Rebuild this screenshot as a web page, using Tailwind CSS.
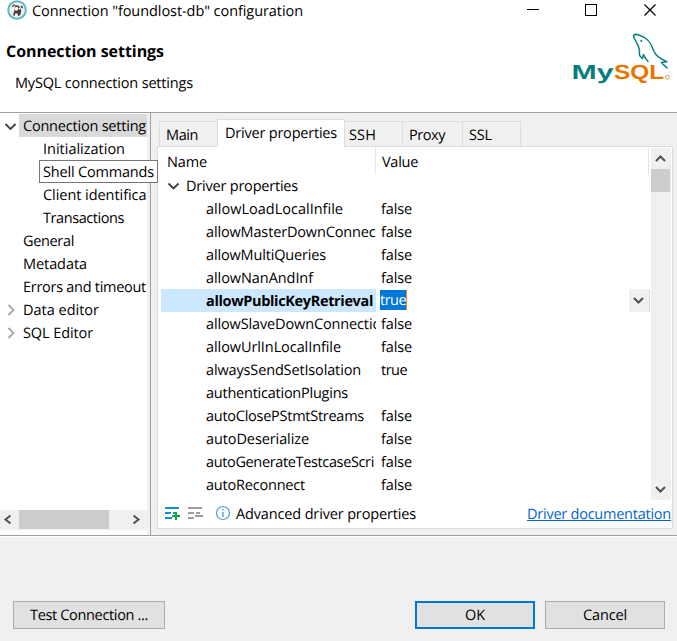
<!DOCTYPE html>
<html lang="en">
<head>
<meta charset="utf-8">
<title>Connection "foundlost-db" configuration</title>
<script src="https://cdn.jsdelivr.net/npm/@tailwindcss/browser@4"></script>
</head>
<body class="w-[677px] h-[641px] overflow-hidden flex flex-col bg-[#f0f0f0] text-black font-['Open_Sans','Noto_Sans',sans-serif] text-[14.5px] leading-[23px] whitespace-nowrap [text-rendering:geometricPrecision] [&_span]:relative [&_span]:top-px">

<!-- Title bar and header -->
<header class="h-[113px] shrink-0 bg-white border-b border-[#a0a0a0]">
  <div class="h-[22px] flex items-start pl-[7px]">
    <svg class="w-[20px] h-[20px] shrink-0" viewBox="0 0 20 20">
      <circle cx="10" cy="10" r="8.8" fill="#f4f1ee" stroke="#5bb9c4" stroke-width="2"/>
      <path d="M4.5 7.5 6 4.8l2-.6-.5 1.6zM13.4 5.2l2.2 1.2.5 2-1.8-.7z" fill="#3b302c"/>
      <path d="M8 5.500c2-.8 4 0 5 1.500l1.300 4-1 4-2 1.200-1-3-2 .2-.8 2.600-1.500-.9 1-3.300z" fill="#4b403c"/>
      <path d="M7.500 7.500l3-.7 1 2.500-2 1.500-2-.7z" fill="#fff"/>
      <circle cx="12.500" cy="8.500" r=".9" fill="#fff"/>
    </svg>
    <div class="ml-[5px] -mt-px"><span data-w="271">Connection "foundlost-db" configuration</span></div>
    <svg class="w-[134px] h-[22px] ml-auto mr-[16px]" viewBox="0 0 134 22" fill="none" stroke="#000" shape-rendering="crispEdges">
      <path d="M0 9.500h12M58.500 4.500h11v11h-11z"/>
      <path d="M117.500 4.500l11 11M128.500 4.500l-11 11" shape-rendering="auto" stroke-width="1.200"/>
    </svg>
  </div>
  <div class="flex justify-between">
    <div class="pl-[6px] pt-[17px]">
      <div class="font-bold text-[16px]"><span data-w="158">Connection settings</span></div>
      <div class="pl-[9px] pt-[9px]"><span data-w="178">MySQL connection settings</span></div>
    </div>
    <svg class="w-[100px] h-[56px] mt-[9px] mr-[5px]" viewBox="572 31 100 56">
      <g font-family="Liberation Sans" font-weight="700" font-size="20.500">
        <text x="571.500" y="79" class="fill-[#087d80]" textLength="42" lengthAdjust="spacingAndGlyphs">My</text>
        <text x="614" y="79" class="fill-[#e87500]" textLength="50" lengthAdjust="spacingAndGlyphs">SQL</text>
      </g>
      <circle cx="667.300" cy="77.300" r="1.900" fill="none" stroke="#e8903a" stroke-width=".9"/>
      <g fill="none" stroke="#087d80" stroke-width="1.500" stroke-linejoin="round" stroke-linecap="round">
        <path d="M648 61.500c-2-2-3.500-5-4.500-7l-1 4c-2.500-1.500-3.500-4-3-6.500.3-4-1.500-7-3.500-10.500-1.500-2.500-2.500-5-2.500-6 1.500-1.500 4-1.200 6-.2 6 1.700 11.500 7 13.500 14 1.500 4 4 7 7.500 9 2 1.300 4.500 2.500 6.500 3.500-2 .2-4 .5-5.500.8 1.500 2 4 3.500 5.500 5.500"/>
        <path d="M641 40.500l.6.800"/>
      </g>
    </svg>
  </div>
</header>

<main class="h-[424px] shrink-0 flex border-b border-white">
  <div class="flex w-full border-b border-[#a0a0a0]">
    <!-- Navigation tree -->
    <nav class="relative w-[147px] shrink-0 bg-white pt-px flex flex-col">
      <div class="flex h-[23px] overflow-hidden">
        <svg class="w-[19px] h-[23px] shrink-0" viewBox="0 0 19 23"><path d="M5.500 10l5 5 5-5" fill="none" stroke="#404040" stroke-width="1.800"/></svg>
        <div class="w-[128px] bg-[#d9d9d9] pl-[4px]"><span data-w="123">Connection setting</span></div>
      </div>
      <div class="pl-[43px]"><span data-w="82">Initialization</span></div>
      <div class="h-[23px]"></div>
      <div class="pl-[43px]"><span data-w="103.500">Client identifica</span></div>
      <div class="pl-[43px]"><span data-w="81">Transactions</span></div>
      <div class="pl-[23px]"><span data-w="51">General</span></div>
      <div class="pl-[23px]"><span data-w="64">Metadata</span></div>
      <div class="pl-[23px]"><span data-w="123">Errors and timeout</span></div>
      <div class="flex"><svg class="w-[23px] h-[23px]" viewBox="0 0 23 23"><path d="M8.500 7l5 5-5 5" fill="none" stroke="#a6a6a6" stroke-width="1.800"/></svg><span data-w="76">Data editor</span></div>
      <div class="flex"><svg class="w-[23px] h-[23px]" viewBox="0 0 23 23"><path d="M8.500 7l5 5-5 5" fill="none" stroke="#a6a6a6" stroke-width="1.800"/></svg><span data-w="70">SQL Editor</span></div>
      <div class="absolute z-10 left-[39px] top-[47px] w-[119px] h-[23px] border border-[#767676] bg-white pl-[3px] leading-[21px]"><span data-w="111">Shell Commands</span></div>
      <div class="mt-auto mb-[5px] h-[20px] bg-[#f0f0f0] flex items-start">
        <svg class="w-[19px] h-[19px]" viewBox="0 0 19 19"><path d="M10.500 5.500l-5 4 5 4" fill="none" stroke="#505050" stroke-width="2"/></svg>
        <div class="w-[90px] h-[19px] bg-[#cdcdcd]"></div>
        <svg class="w-[19px] h-[19px] ml-auto" viewBox="0 0 19 19"><path d="M5.500 5.500l5 4-5 4" fill="none" stroke="#505050" stroke-width="2"/></svg>
      </div>
    </nav>
    <div class="w-[4px] shrink-0 border-r border-[#a0a0a0]"></div>

    <!-- Tab folder -->
    <section class="w-[522px] pl-[6px] pt-[6px] flex flex-col">
      <div class="h-[27px] flex items-end pl-[2px]">
        <div class="w-[58px] h-[25px] border-t border-l border-[#dcdcdc] pl-[6px] pt-px"><span data-w="32">Main</span></div>
        <div class="relative w-[128px] h-[28px] -mb-px border-t border-x border-[#dcdcdc] bg-white pl-[7px] pt-px"><span data-w="112">Driver properties</span></div>
        <div class="w-[57px] h-[25px] border-t border-[#dcdcdc] pl-[4px] pt-px"><span data-w="27">SSH</span></div>
        <div class="w-[60px] h-[25px] border-t border-l border-[#dcdcdc] pl-[6px] pt-px"><span data-w="36">Proxy</span></div>
        <div class="w-[59px] h-[25px] border-t border-x border-[#dcdcdc] pl-[6px] pt-px"><span data-w="23">SSL</span></div>
      </div>
      <div class="h-[383px] border border-[#dcdcdc] bg-white pt-px pl-[3px] pr-px">
        <div class="flex h-[352px]">
          <div class="w-[490px] shrink-0">
            <div class="flex h-[26px] leading-[27px]">
              <div class="w-[215px] h-[26px] border-r border-[#e5e5e5] pl-[6px]"><span data-w="40">Name</span></div>
              <div class="w-[273px] h-[26px] border-r border-[#e5e5e5] pl-[6px]"><span data-w="36">Value</span></div>
            </div>
            <div class="flex h-[23px]">
              <svg class="w-[25px] h-[23px]" viewBox="0 0 25 23"><path d="M7.500 9.500l5 5 5-5" fill="none" stroke="#404040" stroke-width="1.800"/></svg>
              <span data-w="112">Driver properties</span>
            </div>
            <div class="flex h-[23px]"><div class="w-[215px] pl-[45px]"><span data-w="137">allowLoadLocalInfile</span></div><div class="pl-[5px]"><span data-w="31">false</span></div></div>
            <div class="flex h-[23px]"><div class="w-[215px] pl-[45px]"><span data-w="169.500">allowMasterDownConnec</span></div><div class="pl-[5px]"><span data-w="31">false</span></div></div>
            <div class="flex h-[23px]"><div class="w-[215px] pl-[45px]"><span data-w="120">allowMultiQueries</span></div><div class="pl-[5px]"><span data-w="31">false</span></div></div>
            <div class="flex h-[23px]"><div class="w-[215px] pl-[45px]"><span data-w="107">allowNanAndInf</span></div><div class="pl-[5px]"><span data-w="31">false</span></div></div>
            <div class="flex h-[23px]">
              <div class="w-[215px] pl-[45px] bg-[#cce8ff] font-bold"><span data-w="167">allowPublicKeyRetrieval</span></div>
              <div class="ml-[4px] mt-px h-[20px] bg-[#0078d7] border-r border-[#ff8728] text-white leading-[20px]"><span data-w="26">true</span></div>
              <div class="ml-auto mr-px w-[21px] bg-[#f0f0f0] border-r border-[#dcdcdc]"><svg class="w-[20px] h-[23px]" viewBox="0 0 20 23"><path d="M5 9l4.500 4.500L14 9" fill="none" stroke="#505050" stroke-width="2"/></svg></div>
            </div>
            <div class="flex h-[23px]"><div class="w-[215px] pl-[45px] overflow-hidden"><span data-w="175">allowSlaveDownConnectio</span></div><div class="pl-[5px]"><span data-w="31">false</span></div></div>
            <div class="flex h-[23px]"><div class="w-[215px] pl-[45px]"><span data-w="135">allowUrlInLocalInfile</span></div><div class="pl-[5px]"><span data-w="31">false</span></div></div>
            <div class="flex h-[23px]"><div class="w-[215px] pl-[45px]"><span data-w="155">alwaysSendSetIsolation</span></div><div class="pl-[5px]"><span data-w="26">true</span></div></div>
            <div class="flex h-[23px]"><div class="w-[215px] pl-[45px]"><span data-w="142">authenticationPlugins</span></div></div>
            <div class="flex h-[23px]"><div class="w-[215px] pl-[45px]"><span data-w="158">autoClosePStmtStreams</span></div><div class="pl-[5px]"><span data-w="31">false</span></div></div>
            <div class="flex h-[23px]"><div class="w-[215px] pl-[45px]"><span data-w="103">autoDeserialize</span></div><div class="pl-[5px]"><span data-w="31">false</span></div></div>
            <div class="flex h-[23px]"><div class="w-[215px] pl-[45px]"><span data-w="168">autoGenerateTestcaseScri</span></div><div class="pl-[5px]"><span data-w="31">false</span></div></div>
            <div class="flex h-[23px]"><div class="w-[215px] pl-[45px]"><span data-w="99">autoReconnect</span></div><div class="pl-[5px]"><span data-w="31">false</span></div></div>
          </div>
          <div class="w-[20px] shrink-0 bg-[#f0f0f0] flex flex-col">
            <svg class="w-[20px] h-[21px]" viewBox="0 0 20 21"><path d="M5 13l4.500-4.500L14 13" fill="none" stroke="#505050" stroke-width="2"/></svg>
            <div class="w-[19px] h-[23px] bg-[#cdcdcd]"></div>
            <svg class="w-[20px] h-[20px] mt-auto" viewBox="0 0 20 20"><path d="M5 7l4.500 4.500L14 7" fill="none" stroke="#505050" stroke-width="2"/></svg>
          </div>
        </div>
        <div class="flex h-[27px] items-center">
          <svg class="w-[75px] h-[20px] self-start mt-[4px]" viewBox="161 504 75 20" fill="none" stroke-width="2">
            <path d="M165 508h14M165 513h6M173 513h4M165 518h7" stroke="#1490d0"/>
            <path d="M172 516h8M176 512v8" stroke="#0aa83c"/>
            <path d="M188 508h14M188 513h6M196 513h4M188 518h6M195 516h8" stroke="#9c9c9c"/>
            <circle cx="223" cy="513" r="6.500" stroke="#4c9bd0" stroke-width="1.200"/>
            <path d="M223 509v1.500M223 512v5" stroke="#5ba4d6" stroke-width="1.500"/>
          </svg>
          <span data-w="180">Advanced driver properties</span>
          <a class="ml-auto text-[#0066cc] underline underline-offset-2"><span data-w="144">Driver documentation</span></a>
        </div>
      </div>
    </section>
  </div>
</main>

<!-- Button bar -->
<footer class="flex-1 flex items-end pb-[12px] pl-[13px] pr-[12px] leading-[26px] text-center">
  <div class="w-[152px] h-[28px] bg-[#e1e1e1] border border-[#adadad]"><span data-w="118">Test Connection ...</span></div>
  <div class="w-[120px] h-[28px] bg-[#e1e1e1] border-2 border-[#0078d7] leading-[24px] ml-auto"><span data-w="20">OK</span></div>
  <div class="w-[120px] h-[28px] bg-[#e1e1e1] border border-[#adadad] ml-[10px]"><span data-w="44">Cancel</span></div>
</footer>

<script>
  // Track each label so its advance width equals data-w
  function fitLabels() {
    document.querySelectorAll('[data-w]').forEach(el => {
      el.style.letterSpacing = '0px';
      const w = el.getBoundingClientRect().width;
      el.style.letterSpacing = ((+el.dataset.w - w) / el.textContent.length) + 'px';
    });
  }
  fitLabels();
  window.addEventListener('load', fitLabels);
  document.fonts.ready.then(fitLabels);
</script>
</body>
</html>
